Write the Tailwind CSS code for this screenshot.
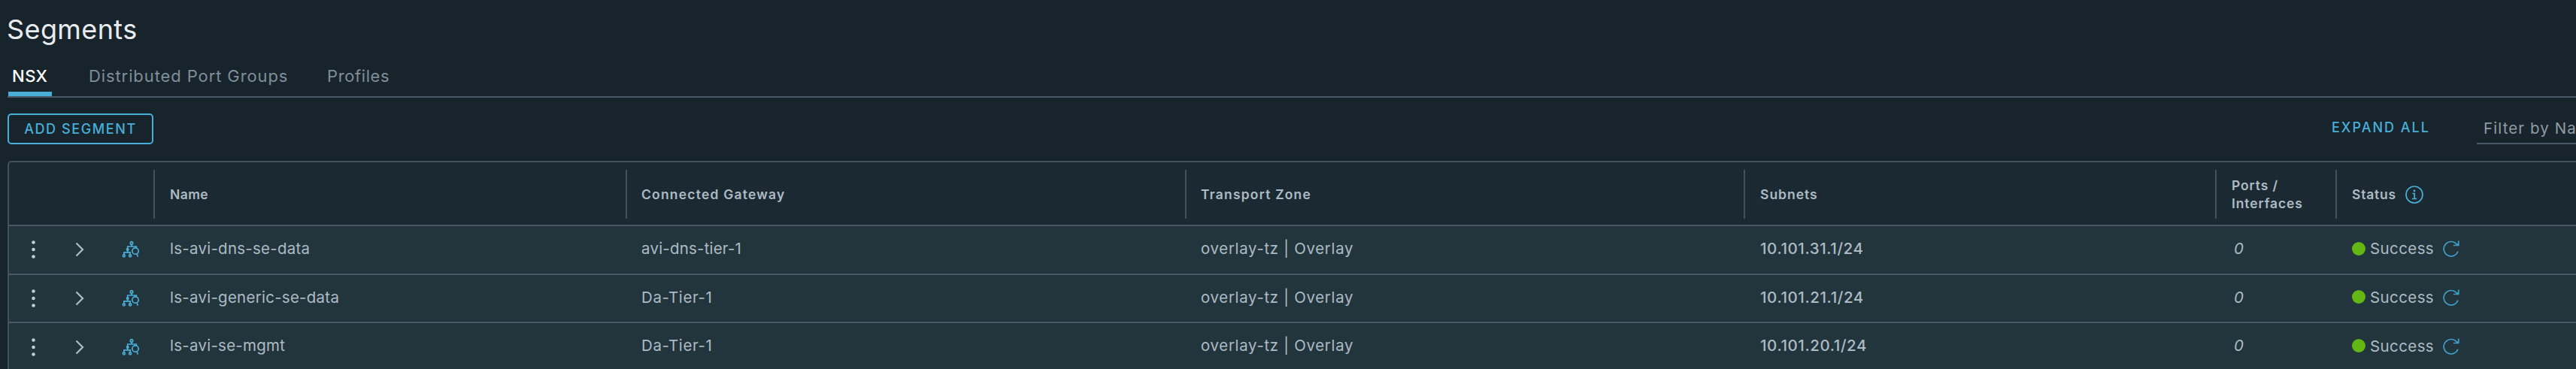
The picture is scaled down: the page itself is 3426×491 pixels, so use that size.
<!DOCTYPE html>
<html lang="en">
<head>
<meta charset="utf-8">
<title>Segments</title>
<script src="https://cdn.jsdelivr.net/npm/@tailwindcss/browser@4"></script>
</head>
<body class="bg-[#17242b] w-[3426px] h-[491px] overflow-hidden font-['Inter',sans-serif] text-[#adbbc4]">
<svg class="hidden">
  <symbol id="seg" viewBox="0 0 24 24" fill="none" stroke="currentColor" stroke-width="1.700">
    <circle cx="13" cy="3.400" r="1.700"/><path d="M13 5v3M7.700 11V8h11.600v2M7.700 13v2.800M2.900 18.500v-2.700h8.200v2.700"/>
    <circle cx="7.700" cy="12" r="1.200" fill="currentColor"/><circle cx="2.800" cy="20.300" r="1.500"/><circle cx="11.100" cy="20.300" r="1.500"/>
    <circle cx="18" cy="14" r="4.200"/><path d="M20 17.800l1.400 3.800"/>
  </symbol>
  <symbol id="refresh" viewBox="0 0 24 24" fill="none" stroke="currentColor" stroke-width="1.700">
    <path d="M21 15.500A9.700 9.700 0 1 1 19.500 6.200"/><path d="M15 7.500h6.800V1.500"/><path d="M17.500 7.500l4-3.500v3.500z" fill="currentColor" stroke="none"/>
  </symbol>
</svg>

<header class="h-[76px] pl-[9px] pt-[11px]">
  <h1 class="text-[36px] leading-[56px] tracking-[0.400px] text-[#e9ecef]">Segments</h1>
</header>
<nav class="ml-[10px] h-[54px] border-b-2 border-[#4a5965] flex text-[22px] leading-[40px] text-[#7f8e99] whitespace-nowrap">
  <div class="w-[58px] h-[52px] ml-px border-b-[6px] border-[#49afd9] pl-[5px] pt-[5px] text-white tracking-[0.500px] font-medium">NSX</div>
  <div class="pt-[5px] tracking-[0.900px] ml-[49px] w-[264px]">Distributed Port Groups</div>
  <div class="pt-[5px] tracking-[0.600px] ml-[53px]">Profiles</div>
</nav>

<div class="h-[84px] flex pl-[10px] whitespace-nowrap">
  <button class="mt-[21px] w-[194px] h-[41px] rounded-[5px] border-2 border-[#49afd9] text-[#49afd9] text-[18px] font-medium tracking-[1.600px] shrink-0">ADD SEGMENT</button>
  <div class="mt-[26px] ml-[2897px] w-[193px] shrink-0 text-[18px] leading-7 font-medium tracking-[2px] text-[#49afd9]">EXPAND ALL</div>
  <div class="mt-[26px] w-[300px] h-[36px] shrink-0 pl-[9px] border-b-2 border-[#4a5965] text-[20.500px] tracking-[1.100px] leading-[29px] text-[#8f9ba3]">Filter by Name</div>
</div>

<main class="ml-[10px] w-[3430px] h-[300px] border-2 border-b-0 border-[#42515c] rounded-tl-[5px] bg-[#1b2a32]">
  <div class="grid grid-cols-[192px_628px_744px_743px_627px_160px_1fr] h-[83px] pt-[10px] pb-[8px] text-[17.500px] leading-6 font-semibold *:flex *:items-center">
    <div></div>
    <div class="border-l-2 border-[#42515c] pl-[20px] tracking-[0.400px]">Name</div>
    <div class="border-l-2 border-[#42515c] pl-[19px] tracking-[1.200px]">Connected Gateway</div>
    <div class="border-l-2 border-[#42515c] pl-[19px] tracking-[1.200px]">Transport Zone</div>
    <div class="border-l-2 border-[#42515c] pl-[20px] tracking-[1px]">Subnets</div>
    <div class="border-l-2 border-[#42515c] pl-[20px] tracking-[0.900px]">Ports /<br>Interfaces</div>
    <div class="border-l-2 border-[#42515c] pl-[20px] tracking-[0.800px]">Status
      <svg class="size-6 ml-[12px] text-[#49afd9]" viewBox="0 0 24 24" fill="none" stroke="currentColor" stroke-width="1.700"><circle cx="12" cy="12" r="11"/><path d="M9.500 10.500h2.700v7M9 17.500h6.300"/><circle cx="12" cy="7" r="1.400" fill="currentColor" stroke="none"/></svg>
    </div>
  </div>
  <div id="rows"></div>
</main>
<template id="row">
  <div class="grid grid-cols-[192px_628px_744px_743px_627px_160px_1fr] h-[64.667px] border-t-2 border-[#4a5965] bg-[#22343c] text-[20.500px] leading-[59px] whitespace-nowrap">
    <div class="flex items-center pl-[30px]">
      <svg class="w-[5px] h-[24px] text-[#c3cdd4]" viewBox="0 0 5 24" fill="currentColor"><circle cx="2.500" cy="2.500" r="2.300"/><circle cx="2.500" cy="12" r="2.300"/><circle cx="2.500" cy="21.500" r="2.300"/></svg>
      <svg class="w-[12px] h-[20px] ml-[53px]" viewBox="0 0 12 20" fill="none" stroke="currentColor" stroke-width="2.300"><path d="M1.500 1.500L10 10l-8.500 8.500"/></svg>
      <svg class="size-[24px] ml-[50px] text-[#49afd9]"><use href="#seg"/></svg>
    </div>
    <div class="pl-[22px]" data-f="name"></div>
    <div class="pl-[21px]" data-f="gw"></div>
    <div class="pl-[21px] tracking-[0.650px]">overlay-tz | Overlay</div>
    <div class="pl-[22px] font-medium tracking-[0.600px]" data-f="net"></div>
    <div class="pl-[25px] italic">0</div>
    <div class="flex items-center pl-[22px]">
      <span class="size-[18px] rounded-full bg-[#62b715] -mt-[3px]"></span>
      <span class="ml-[6px] -mt-[3px] tracking-[0.400px]">Success</span>
      <svg class="size-[24px] ml-[11px] -mt-[2px] text-[#3f9cc4]"><use href="#refresh"/></svg>
    </div>
  </div>
</template>
<script>
const data = [
  ['ls-avi-dns-se-data', 'avi-dns-tier-1', '10.101.31.1/24'],
  ['ls-avi-generic-se-data', 'Da-Tier-1', '10.101.21.1/24'],
  ['ls-avi-se-mgmt', 'Da-Tier-1', '10.101.20.1/24']
];
for (const [name, gw, net] of data) {
  const r = document.getElementById('row').content.cloneNode(true);
  const put = (k, v) => { r.querySelector('[data-f=' + k + ']').textContent = v; };
  put('name', name); put('gw', gw); put('net', net);
  r.querySelector('[data-f=name]').classList.add('tracking-[0.250px]');
  r.querySelector('[data-f=gw]').classList.add(gw[0] === 'D' ? 'tracking-[0.600px]' : 'tracking-[0.200px]');
  document.getElementById('rows').append(r);
}
</script>
</body>
</html>
